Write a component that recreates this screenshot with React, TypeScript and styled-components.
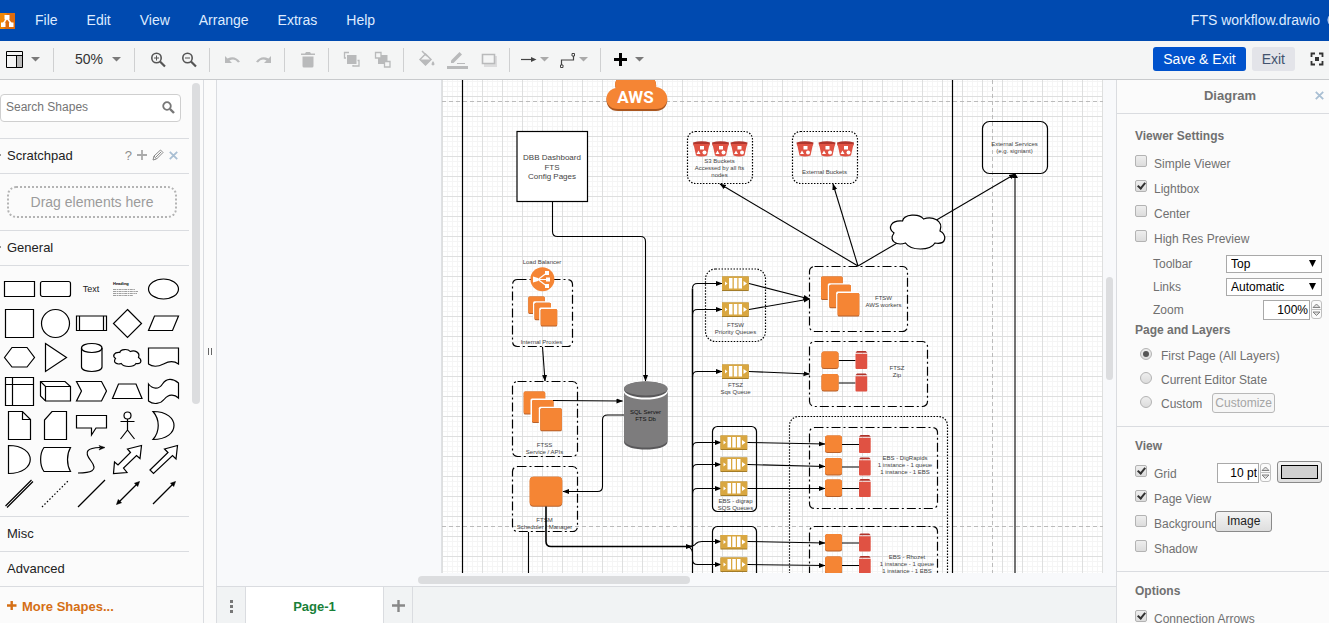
import React from 'react';
import styled, { createGlobalStyle } from 'styled-components';

const GlobalStyle = createGlobalStyle`
  *, *::before, *::after { box-sizing: border-box; }
  body {
    margin: 0;
    font-family: "Liberation Sans", Arial, Helvetica, sans-serif;
    font-size: 12px;
    overflow: hidden;
  }
  button, input, select { font-family: inherit; font-size: inherit; margin: 0; }
`;

/* ---------- shell ---------- */

const Shell = styled.div`
  display: flex;
  flex-direction: column;
  height: 100vh;
  overflow: hidden;
  background: #fbfbfb;
`;

const MenuBar = styled.header`
  display: flex;
  align-items: center;
  flex: none;
  height: 41px;
  background: #004ab0;
  color: #deebff;
  overflow: hidden;
`;

const Menus = styled.nav`
  display: flex;
  gap: 29px;
  margin-left: 20px;
  padding-bottom: 2px;
`;

const MenuItem = styled.button`
  border: 0;
  padding: 0;
  background: none;
  color: inherit;
  font-size: 14px;
  line-height: 20px;
`;

const FileTitle = styled.div`
  display: flex;
  align-items: center;
  gap: 7px;
  margin: 0 -14px 0 auto;
  padding-bottom: 2px;
  font-size: 14px;
  line-height: 20px;
  white-space: nowrap;
`;

/* ---------- toolbar ---------- */

const ToolBar = styled.div`
  display: flex;
  align-items: center;
  flex: none;
  height: 39px;
  border-bottom: 1px solid #c8cacc;
  background: #f4f5f5;
`;

const ToolButton = styled.button<{ $width?: number; $dim?: boolean }>`
  display: flex;
  align-items: center;
  flex: none;
  width: ${p => p.$width ?? 31}px;
  height: 24px;
  padding: 0 0 2px;
  border: 0;
  background: none;
  color: ${p => (p.$dim ? '#b9babb' : '#555')};
`;

const ZoomButton = styled(ToolButton)`
  gap: 9px;
  padding-left: 13px;
  color: #333;
  font-size: 14px;
`;

const Separator = styled.span`
  flex: none;
  width: 1px;
  height: 24px;
  margin: 0 8px 0 4px;
  background: #cfd0d1;
`;

const ToolBarEnd = styled.div`
  display: flex;
  align-items: center;
  gap: 6px;
  margin-left: auto;
  padding-right: 5px;
`;

const ActionButton = styled.button<{ $primary?: boolean }>`
  height: 24px;
  padding: 0 10px;
  margin-bottom: 2px;
  border: 0;
  border-radius: 3px;
  background: ${p => (p.$primary ? '#0052cc' : '#e3e4e9')};
  color: ${p => (p.$primary ? '#fff' : '#42526e')};
  font-size: 14px;
  line-height: 24px;
`;

const FullscreenButton = styled(ToolButton)`
  margin-left: 9px;
`;

/* ---------- body ---------- */

const Body = styled.div`
  display: flex;
  flex: 1;
  min-height: 0;
`;

const Sidebar = styled.aside`
  display: flex;
  flex-direction: column;
  flex: none;
  width: 204px;
  border-right: 1px solid #dadce0;
  color: #222;
`;

const SidebarScroll = styled.div`
  display: flex;
  flex: 1;
  min-height: 0;
`;

const Palettes = styled.div`
  flex: 1;
  min-width: 0;
  overflow: hidden;
`;

const VerticalTrack = styled.div<{ $width: number; $before: number }>`
  flex: none;
  width: ${p => p.$width}px;
  padding: ${p => p.$before}px 3px 0;
`;

const Thumb = styled.div<{ $length: number; $across?: boolean }>`
  width: ${p => (p.$across ? `${p.$length}px` : 'auto')};
  height: ${p => (p.$across ? '8px' : `${p.$length}px`)};
  border-radius: 4px;
  background: #dcdddf;
`;

const SearchArea = styled.div`
  padding: 14px 8px 16px 0;
  border-bottom: 1px solid #dadce0;
`;

const SearchBox = styled.label`
  display: flex;
  align-items: center;
  height: 28px;
  padding: 0 5px 2px;
  border: 1px solid #cfcfcf;
  border-radius: 4px;
  background: #fff;
`;

const SearchInput = styled.input`
  flex: 1;
  min-width: 0;
  padding: 0;
  border: 0;
  outline: 0;
  background: none;
  color: #222;
  &::placeholder { color: #757575; opacity: 1; }
`;

const PaletteTitle = styled.div<{ $last?: boolean }>`
  display: flex;
  align-items: center;
  height: 35px;
  padding: 0 11px 2px 0;
  border-bottom: ${p => (p.$last ? 0 : 1)}px solid #dadce0;
  font-size: 13px;
`;

const Twisty = styled.span<{ $shown?: boolean }>`
  width: 1px;
  height: 2px;
  margin-right: 6px;
  background: ${p => (p.$shown ? '#999' : 'transparent')};
`;

const TitleActions = styled.span`
  display: flex;
  align-items: center;
  gap: 5px;
  margin-left: auto;
`;

const IconButton = styled.button`
  display: flex;
  align-items: center;
  justify-content: center;
  padding: 0;
  border: 0;
  background: none;
  color: #8e8e8e;
`;

const ScratchArea = styled.div`
  padding: 12px;
  padding-left: 7px;
  border-bottom: 1px solid #dadce0;
`;

const DropZone = styled.div`
  height: 32px;
  border: 2px dotted #b4b4b4;
  border-radius: 9px;
  color: #9b9b9b;
  font-size: 14px;
  line-height: 28px;
  text-align: center;
`;

const ShapeGrid = styled.div`
  display: grid;
  grid-template-columns: repeat(5, 36px);
  grid-auto-rows: 34px;
  padding: 6px 1px;
  border-bottom: 1px solid #dadce0;
`;

const ShapeButton = styled.button`
  display: block;
  padding: 0;
  border: 0;
  background: none;
  & svg { display: block; }
`;

const MoreShapes = styled.button`
  display: flex;
  align-items: center;
  gap: 5px;
  flex: none;
  height: 37px;
  padding: 2px 0 0 7px;
  border: 0;
  border-top: 1px solid #dadce0;
  background: none;
  color: #d56f15;
  font-size: 13px;
  font-weight: bold;
`;

const Splitter = styled.div`
  display: flex;
  align-items: center;
  justify-content: center;
  gap: 2px;
  flex: none;
  width: 12px;
  &::before, &::after { content: ''; width: 1px; height: 7px; background: #666; }
`;

/* ---------- canvas ---------- */

const Workspace = styled.main`
  display: flex;
  flex-direction: column;
  flex: 1;
  min-width: 0;
  border-left: 1px solid #dadce0;
  background: #f8f9fb;
`;

const CanvasRow = styled.div`
  display: flex;
  flex: 1;
  min-height: 0;
`;

const Viewport = styled.div`
  flex: 1;
  min-width: 0;
  padding-left: 224px;
`;

const PageSheet = styled.div`
  height: 100%;
  border-left: 1px solid #dfe1e4;
  background: #fff;
`;

const Drawing = styled.svg`
  display: block;
  width: 100%;
  height: 100%;
  font-family: "Liberation Sans", Arial, sans-serif;
`;

const HorizontalTrack = styled.div`
  flex: none;
  height: 13px;
  padding: 3px 0 0 201px;
`;

const TabBar = styled.div`
  display: flex;
  flex: none;
  height: 37px;
  border-top: 1px solid #dadce0;
  background: #f1f3f4;
`;

const TabButton = styled.button<{ $width: number; $current?: boolean }>`
  display: flex;
  align-items: center;
  justify-content: center;
  width: ${p => p.$width}px;
  padding: 2px 0 0;
  border: 0;
  border-right: 1px solid #dadce0;
  background: ${p => (p.$current ? '#fff' : 'none')};
  color: ${p => (p.$current ? '#188038' : '#80868b')};
  font-size: 13px;
  font-weight: bold;
`;

/* ---------- format panel ---------- */

const FormatPanel = styled.aside`
  flex: none;
  width: 213px;
  border-left: 1px solid #dadce0;
  color: #707070;
  overflow: hidden;
`;

const PanelHeader = styled.div`
  display: grid;
  grid-template-columns: 34px 1fr 20px;
  align-items: center;
  height: 34px;
  margin-bottom: 3px;
  padding-bottom: 2px;
  border-bottom: 1px solid #dadce0;
  text-align: center;
  font-size: 13px;
  font-weight: bold;
`;

const PanelSection = styled.section`
  padding: 10px 7px 11px 18px;
  border-bottom: 1px solid #dadce0;
`;

const SectionTitle = styled.h2<{ $tight?: boolean }>`
  margin: 0 0 ${p => (p.$tight ? 5 : 6)}px;
  padding-top: 1px;
  font-size: 12px;
  line-height: 16px;
`;

const OptionRow = styled.div<{ $radio?: boolean }>`
  display: flex;
  align-items: center;
  height: ${p => (p.$radio ? 24 : 25)}px;
  padding-left: ${p => (p.$radio ? 5 : 0)}px;
`;

const Tick = styled.input`
  appearance: none;
  flex: none;
  display: flex;
  justify-content: center;
  width: 12px;
  height: 12px;
  margin: 0 0 3px;
  border: 1px solid #b3b3b3;
  border-radius: ${p => (p.type === 'radio' ? '50%' : '2px')};
  background: linear-gradient(#eee, #dcdcdc);
  &[type='checkbox']:checked::after {
    content: '';
    width: 5px;
    height: 8px;
    border: solid #333;
    border-width: 0 2px 2px 0;
    transform: rotate(40deg);
  }
  &[type='radio']:checked::after {
    content: '';
    align-self: center;
    width: 6px;
    height: 6px;
    border-radius: 50%;
    background: #555;
  }
`;

const OptionLabel = styled.label<{ $radio?: boolean; $narrow?: boolean }>`
  flex: ${p => (p.$narrow ? '0 0 68px' : 'none')};
  width: ${p => (p.$narrow ? '68px' : 'auto')};
  padding: 2px 0 0 ${p => (p.$radio ? 9 : 7)}px;
  line-height: 16px;
  white-space: nowrap;
`;

const FieldList = styled.div`
  padding: 2px 0 0 18px;
`;

const FieldRow = styled.div`
  display: flex;
  align-items: center;
  justify-content: space-between;
  height: 23px;
`;

const SelectBox = styled.span`
  display: grid;
  align-items: center;
  width: 96px;
  & > * { grid-area: 1 / 1; }
  & > svg { justify-self: end; margin-right: 6px; pointer-events: none; }
`;

const Select = styled.select`
  appearance: none;
  height: 18px;
  padding: 0 4px;
  border: 1px solid #a9a9a9;
  border-radius: 0;
  background: #fff;
  color: #000;
`;

const NumberGroup = styled.span`
  display: flex;
  align-items: center;
  gap: 1px;
  margin-left: auto;
`;

const NumberInput = styled.input<{ $width: number }>`
  width: ${p => p.$width}px;
  height: 20px;
  padding: 0 1px;
  border: 1px solid #a9a9a9;
  color: #000;
  text-align: right;
`;

const Stepper = styled.button`
  display: flex;
  width: 11px;
  height: 19px;
  padding: 0;
  border: 1px solid #c0c0c0;
  border-radius: 3px;
  background: #fbfbfb;
`;

const PanelButton = styled.button`
  position: relative;
  height: 21px;
  padding: 0 11px;
  margin-bottom: 2px;
  border: 1px solid #8a8a8a;
  border-radius: 3px;
  background: linear-gradient(#f4f4f4, #dedede);
  color: #222;
  line-height: 19px;
  &:disabled {
    height: 20px;
    margin: 0 0 0 10px;
    padding: 0 2px;
    border-color: #b8b8b8;
    background: #f6f6f6;
    color: #a5a5a5;
    line-height: 18px;
  }
`;

const ColorButton = styled.button`
  width: 45px;
  height: 22px;
  margin: 0 0 2px 6px;
  padding: 3px;
  border: 1px solid #8a8a8a;
  border-radius: 3px;
  background: linear-gradient(#f4f4f4, #dedede);
`;

const Swatch = styled.span`
  display: block;
  height: 14px;
  border: 1px solid #000;
  background: #d0d0d0;
`;

/* ---------- small icons ---------- */

const Caret = ({ color = '#7a7a7a' }: { color?: string }) => (
  <svg width="9" height="5" viewBox="0 0 9 5" aria-hidden><path d="M0 0h9L4.500 4.500z" fill={color} /></svg>
);

const ToolIcon = ({ children, width = 31 }: { children: React.ReactNode; width?: number }) => (
  <svg width={width} height="24" viewBox={`0 0 ${width} 24`} fill="none" aria-hidden>{children}</svg>
);

const Cross = ({ size = 9 }: { size?: number }) => (
  <svg width={size} height={size} viewBox="0 0 9 9" aria-hidden>
    <path d="M.8.8l7.400 7.400M8.200.8L.8 8.200" stroke="#a9bfd3" strokeWidth="1.800" />
  </svg>
);

const Logo = () => (
  <svg width="15" height="16" viewBox="0 0 15 16" aria-hidden>
    <path d="M0 0h14a1 1 0 0 1 1 1v14a1 1 0 0 1-1 1H0z" fill="#f08705" />
    <path d="M7 0h7a1 1 0 0 1 1 1v14a1 1 0 0 1-1 1H5l-3-3z" fill="#df6c0c" />
    <path d="M7 5L3 11M7 5l4.500 6" stroke="#fff" strokeWidth="1.500" />
    <path d="M4.500 2h5v4.500h-5zM1 9.500h4.500V14H1zM9 9.500h4.500V14H9z" fill="#fff" />
  </svg>
);

/* ---------- shape palette ---------- */

const CLOUD = 'M12.500 7C14 0 29 -1 33.500 5C42 2 54 6 50 17C57 21 57 31 45 29C40 37 21 37 15.500 29C7 32 -2 27 4 19C-3 14 1 6 12.500 7z';

const P = (d: string, fill = '#fff') => <path d={d} fill={fill} />;
const headUp = <path d="M30.500 5.500l-5 1.800 1.700 1.500 1.500 1.700z" fill="#000" strokeWidth="0.600" />;
const headDown = <path d="M7.500 28.500l5-1.800-1.700-1.500-1.500-1.700z" fill="#000" strokeWidth="0.600" />;

const shapes: [string, React.ReactNode][] = [
  ['Rectangle', P('M3.500 9.500h30v15h-30z')],
  ['Rounded rectangle', <rect x="3.500" y="9.500" width="30" height="15" rx="2" fill="#fff" />],
  ['Text', <text x="18" y="20" textAnchor="middle" fontSize="9" fill="#222" stroke="none">Text</text>],
  ['Textbox', <>
    <text x="4" y="13" fontSize="4" fontWeight="bold" fill="#000" stroke="none">Heading</text>
    <path d="M4 17.500h22M4 19.500h25M4 21.500h24M4 23.500h20" stroke="#888" strokeWidth="0.800" strokeDasharray="3 .6 1.500 .5" />
  </>],
  ['Ellipse', <ellipse cx="18.500" cy="17" rx="15" ry="10" fill="#fff" />],
  ['Square', P('M4.500 3.500h28v28h-28z')],
  ['Circle', <circle cx="18.500" cy="17.500" r="14" fill="#fff" />],
  ['Process', P('M3.500 10h30v14.500h-30zM6.500 10v14.500M30.500 10v14.500')],
  ['Diamond', P('M18.500 3.500l14 14-14 14-14-14z')],
  ['Parallelogram', P('M9.500 10h24l-6 14.500h-24z')],
  ['Hexagon', P('M3.500 17.500l7.500-10h15l7.500 10-7.500 9.500H11z')],
  ['Triangle', P('M8.500 3.500l21 14-21 14z')],
  ['Cylinder', <>{P('M8.500 8c0-6 20.500-6 20.500 0v19c0 6-20.500 6-20.500 0z')}{P('M8.500 8c0 6 20.500 6 20.500 0', 'none')}</>],
  ['Cloud', <path d={CLOUD} transform="translate(4.500 9) scale(.5)" strokeWidth="2.400" fill="#fff" />],
  ['Document', P('M3.500 8h30v16c-7-5-13-1-15 0-6 3-11 3-15 0z')],
  ['Internal storage', P('M4.500 3.500h28v28h-28zM4.500 10.500h28M11.500 3.500v28')],
  ['Cube', <>{P('M3.500 7.500h24.500l5.500 5V27H8.500l-5-5z')}{P('M3.500 7.500l5 5h25M8.500 12.500V27', 'none')}</>],
  ['Step', P('M3.500 7.500h25l5 9.500-5 10h-25l5-10z')],
  ['Trapezoid', P('M9.500 10h17.500l6 14.500H3.500z')],
  ['Tape', P('M3.500 10c4 5 10 6 14 0s10-6 16-1v15c-4-4-10-4-14 1s-11 6-16 2z')],
  ['Note', P('M7.500 3.500h14l8 8v20h-22zM21.500 3.500v8h8')],
  ['Card', P('M15 3.500h14.500v28H7.500V12z')],
  ['Callout', P('M3.500 7.500h30V20H23l-4.500 7V20h-15z')],
  ['Actor', <>{P('M18.500 11v11M11.500 13.500h14M18.500 22l-7 9M18.500 22l7 9', 'none')}<circle cx="18.500" cy="7.500" r="3.500" fill="#fff" /></>],
  ['Or', P('M8 3.500c28 0 28 28 0 28 7-8 7-20 0-28z')],
  ['And', P('M7.500 3.500c29 0 29 28 0 28z')],
  ['Data storage', P('M7 5.500h26.500c-4 7-4 17 0 24H7c-4.500-6-4.500-18 0-24z')],
  ['Curve', <>{P('M5 31c12 0 21-2 13-12S15 6 27 5.500', 'none')}<path d="M32 5.500l-6-2 1.500 2-1.500 2.500z" fill="#000" strokeWidth="0.500" /></>],
  ['Bidirectional arrow', P('M4.500 31.500L5.500 20l3.500 3L21.500 10.500l-3-3.500L32.500 3.500 31 16.500l-3.500-3L14.500 26l3.500 4.500z')],
  ['Arrow', P('M5 28L23 10.500l-3.500-3.500L32.500 3.500 31 17l-3.500-3.500L8.500 31.500z')],
  ['Link', P('M4.500 30l26-26M6 31.500l26-26', 'none')],
  ['Dashed line', <path d="M5 31L32 4" strokeDasharray="1.500 2" />],
  ['Line', P('M5 31L32 4', 'none')],
  ['Bidirectional connector', <>{P('M9 27L28.500 7.500', 'none')}{headUp}{headDown}</>],
  ['Directional connector', <>{P('M8 28L28.500 7.500', 'none')}{headUp}</>],
];

/* ---------- diagram parts ---------- */

const Caption = ({ x, y, lines, size = 6, step = 7, color = '#444' }: { x: number; y: number; lines: string[]; size?: number; step?: number; color?: string }) => (
  <text textAnchor="middle" fontSize={size} fill={color}>
    {lines.map((line, i) => <tspan key={line} x={x} y={y + i * step}>{line}</tspan>)}
  </text>
);

const DASHES = { solid: undefined, dotted: '1.500 1.500', chain: '9 3 2 3' };

const Group = ({ x, y, w, h, kind = 'chain', r = 5, fill = 'none' }: { x: number; y: number; w: number; h: number; kind?: keyof typeof DASHES; r?: number; fill?: string }) => (
  <rect x={x} y={y} width={w} height={h} rx={r} fill={fill} stroke="#000" strokeWidth={1.2} strokeDasharray={DASHES[kind]} />
);

const Instance = ({ x, y, w = 17, h = 17.5, r = 2.5, edge = false }: { x: number; y: number; w?: number; h?: number; r?: number; edge?: boolean }) => (
  <g>
    {edge && <rect x={x - 1.5} y={y - 1.5} width={w + 2} height={h + 1} rx={r} fill="#fff" />}
    <rect x={x} y={y} width={w} height={h} rx={r} fill="#b8612a" />
    <rect x={x} y={y} width={w} height={h - 1} rx={r} fill="#f58534" />
  </g>
);

const Stack = ({ x, y, w, h, dx, dy }: { x: number; y: number; w: number; h: number; dx: number; dy: number }) => (
  <>{[0, 1, 2].map(i => <Instance key={i} x={x + i * dx} y={y + i * dy} w={w} h={h} r={1.5} edge={i > 0} />)}</>
);

const Queue = ({ x, y }: { x: number; y: number }) => (
  <g transform={`translate(${x} ${y})`}>
    <path d="M0 0h26.700v14.500H0z" fill="#a37c28" />
    <path d="M0 0h26.700v13.500H0z" fill="#d9a741" />
    <path d="M7 1.500h3.500V12H7zM11.800 1.500h3.500V12h-3.500zM16.500 1.500h3.500V12h-3.500zM3 5l2.500 2L3 9zM21.500 4.500L25 7l-3.500 2.500z" fill="#fff" />
  </g>
);

const Volume = ({ x, y }: { x: number; y: number }) => (
  <g transform={`translate(${x} ${y})`}>
    <path d="M1.500 0h8.700l1.500 1.800H0z" fill="#b0332a" />
    <path d="M0 2.800h11.700v14.200a1 1 0 0 1-1 1H1a1 1 0 0 1-1-1z" fill="#e05243" />
  </g>
);

const Worker = ({ x, y, vx }: { x: number; y: number; vx: number }) => (
  <g>
    <path d={`M${x + 17} ${y + 9}H${vx}`} stroke="#000" />
    <Instance x={x} y={y} />
    <Volume x={vx} y={y - 0.5} />
  </g>
);

const Bucket = ({ x, y = 141 }: { x: number; y?: number }) => (
  <g transform={`translate(${x} ${y})`}>
    <path d="M0 1.500Q8.500-1 17 1.500l-.5 3H.5z" fill="#b0352c" />
    <path d="M.5 3h16L14 14.500q-5.500 2-11 0z" fill="#e05243" />
    <path d="M7 5h4v3.500H7zM5.500 9.500l2 3.500h-4z" fill="#fff" />
    <circle cx="11.500" cy="11.500" r="2" fill="#fff" />
  </g>
);

const Wire = ({ d, head = true, width = 1.1 }: { d: string; head?: boolean; width?: number }) => (
  <path d={d} fill="none" stroke="#000" strokeWidth={width} markerEnd={head ? 'url(#head)' : undefined} />
);

const branch = (y: number, end: number) => `M692.500 ${y + 5}q0-5 5-5H${end}`;

const Diagram = () => (
  <Drawing role="img" aria-label="FTS workflow diagram">
    <defs>
      <pattern id="grid" x="2" y="16" width="20" height="20" patternUnits="userSpaceOnUse">
        <path d="M5.500 0v20M10.500 0v20M15.500 0v20M0 5.500h20M0 10.500h20M0 15.500h20" stroke="#f5f5f5" />
        <path d="M.5 0v20M0 .5h20" stroke="#dedfdf" />
      </pattern>
      <marker id="head" markerUnits="userSpaceOnUse" markerWidth="7" markerHeight="6" refX="6" refY="3" orient="auto">
        <path d="M0 .5l6.500 2.500L0 5.500z" />
      </marker>
    </defs>
    <g transform="translate(-442 -80)">
      <rect x="442" y="80" width="100%" height="100%" fill="url(#grid)" />
      <path d="M442 101.500h2000M442 526.500h2000M992.500 80v2000" stroke="#bbb" strokeDasharray="4 3" />
      <path d="M462.500 80v2000M952.500 80v2000" stroke="#000" strokeWidth="1.200" />

      <path d="M618 111c-15 0-15-20-2-22q-3-8 4-12h32q5 4 4 11c15 2 15 23 0 23z" fill="#a9561f" />
      <path d="M618 109c-15 0-15-19-2-21q-3-7 4-11h32q5 4 4 10c15 2 15 22 0 22z" fill="#f58534" />
      <text x="635.500" y="103" textAnchor="middle" fontFamily="Roboto, sans-serif" fontSize="17" fontWeight="700" fill="#fff">AWS</text>

      <Wire d="M552.500 202v29.500q0 5 5 5h83q5 0 5 5V381" />
      <Group x={517} y={131.5} w={70.5} h={70} kind="solid" r={0} fill="#fff" />
      <Caption x={552} y={160} lines={['DBB Dashboard', 'FTS', 'Config Pages']} size={8} step={9.500} />

      <Group x={687.5} y={131.5} w={65} h={52} kind="dotted" r={8} />
      {[693, 712, 730.5].map(x => <Bucket key={x} x={x} />)}
      <Caption x={719.5} y={163} lines={['S3 Buckets', 'Accessed by all fts', 'nodes']} />
      <Group x={792.5} y={131.5} w={65} h={52} kind="dotted" r={8} />
      {[796.5, 818.5, 837].map(x => <Bucket key={x} x={x} />)}
      <Caption x={824.5} y={174} lines={['External Buckets']} />
      <Wire d="M858 266L720 184" />
      <Wire d="M858 266L833 184" />
      <Wire d="M858 266L1015 174" />
      <path d={CLOUD} transform="translate(890 214)" fill="#fff" stroke="#000" strokeWidth="1.200" />
      <path d="M1015 176v2000" stroke="#444" strokeWidth="1.500" />
      <path d="M1015 173l-3 5h6z" />
      <Group x={982.5} y={121.5} w={65} h={52} kind="solid" r={7} />
      <Caption x={1014.5} y={146} lines={['External Services', '(e.g. signiant)']} />

      <Caption x={542} y={264} lines={['Load Balancer']} />
      <Group x={512.5} y={279.5} w={60} h={67} />
      <circle cx="542.400" cy="279.300" r="12" fill="#f58534" />
      <path d="M535 279.500h12M538 279.500l8-6M538 279.500l8 6" stroke="#fff" strokeWidth="1.200" />
      <path d="M533 276.500l5 1.500v3l-5 1.500zM545 271h4v4h-4zM546 277.500h4v4h-4zM545 284h4v4h-4z" fill="#fff" />
      <Stack x={528.3} y={296.5} w={16.5} h={17.5} dx={6.2} dy={6.2} />
      <Caption x={541.5} y={344} lines={['Internal Proxies']} />
      <Wire d="M542.500 347L545 381" />

      <Group x={512.5} y={381.5} w={65} h={75} />
      <Stack x={523.7} y={391.5} w={21.5} h={23} dx={8.3} dy={8.4} />
      <Wire d="M553 400.500L622.500 401" />
      <Caption x={544.5} y={447} lines={['FTSS', 'Service / APIs']} />

      <Group x={512.5} y={466.5} w={65} h={65} />
      <Caption x={544.5} y={522} lines={['FTSM', 'Scheduler / Manager']} />
      <Instance x={529.7} y={476.7} w={32.5} h={30} r={4} />
      <Wire d="M546 506.500v35q0 5 5 5h141" width={1.6} />
      <Wire d="M528.500 532v2000" head={false} />

      <path d="M624 391v51c0 10 43.500 10 43.500 0v-51z" fill="#59585a" />
      <path d="M624 391v49c0 10 43.500 10 43.500 0v-49z" fill="#7d7c7d" />
      <ellipse cx="645.750" cy="391.500" rx="22" ry="8" fill="#fff" />
      <ellipse cx="645.750" cy="389.500" rx="21.750" ry="8" fill="#59585a" />
      <ellipse cx="645.750" cy="388.500" rx="21.750" ry="7" fill="#7d7c7d" />
      <Caption x={645.5} y={414} lines={['SQL Server', 'FTS Db']} color="#111" />
      <Wire d="M624 415h-16.500q-5 0-5 5v66.500q0 5-5 5H563" />

      <Wire d="M692.500 2000V540" head={false} width={1.2} />
      <Wire d="M692.500 546V288.500" head={false} width={1.5} />
      {[283.5, 309.5, 371.5].map(y => <Wire key={y} d={branch(y, 722)} />)}
      {[442.5, 464.5, 488.5].map(y => <Wire key={y} d={branch(y, 721)} />)}
      <Wire d="M688 546.500q6 0 8-3 2-2 6-2H721" />
      <Wire d="M688 546.500q4 2 4.500 6v7q0 5 5 5H721" />

      <Group x={705.5} y={269} w={60} h={72.5} kind="dotted" r={10} />
      <Queue x={722} y={276.5} />
      <Queue x={722} y={302.5} />
      <Caption x={735.5} y={327} lines={['FTSW', 'Priority Queues']} />
      <Queue x={722} y={364.5} />
      <Caption x={735.5} y={387} lines={['FTSZ', 'Sqs Queue']} />
      <Wire d="M749 283.500L809.500 299" />
      <Wire d="M749 309.500L809.500 299" />
      <Wire d="M749 371.500L809.500 374" />

      <Group x={809.5} y={266.5} w={98} h={65} />
      <Stack x={821} y={276.5} w={21.7} h={23.5} dx={8.3} dy={8.3} />
      <Caption x={883.5} y={300} lines={['FTSW', 'AWS workers']} />
      <Group x={809.5} y={341.5} w={118} h={65} />
      <Worker x={821.5} y={351.5} vx={855.5} />
      <Worker x={821.5} y={374} vx={855.5} />
      <Caption x={897} y={370} lines={['FTSZ', 'Zip']} />

      <Group x={712.5} y={426.5} w={44} h={85} kind="solid" />
      {[435.5, 457.5, 481.5].map(y => <Queue key={y} x={720.5} y={y} />)}
      <Caption x={735.5} y={503} lines={['EBS - digrap', 'SQS Queues']} />
      <Group x={712.5} y={526.5} w={44} h={85} kind="solid" />
      {[535, 557.5].map(y => <Queue key={y} x={720.5} y={y} />)}

      <Group x={789.5} y={416.5} w={158} h={300} kind="dotted" r={9} />
      <Group x={809.5} y={427.5} w={128} h={81} />
      <Group x={809.5} y={526.5} w={128} h={81} />
      <Wire d="M747.500 442.500L825 444" />
      <Wire d="M747.500 464.500L825 466.500" />
      <Wire d="M747.500 488.500H825" />
      <Wire d="M747.500 541.500L825 543" />
      <Wire d="M747.500 564.500L825 565.500" />
      {[435.5, 458, 479.5, 534, 556.5].map(y => <Worker key={y} x={825} y={y} vx={859} />)}
      <Caption x={905} y={460} lines={['EBS - DigRapids', '1 instance - 1 queue', '1 instance - 1 EBS']} />
      <Caption x={907} y={559} lines={['EBS - Rhozet', '1 instance - 1 queue', '1 instance - 1 EBS']} />
    </g>
  </Drawing>
);

/* ---------- composed parts ---------- */

const Option = ({ id, text, checked, radio, narrow, children }: { id: string; text: string; checked?: boolean; radio?: boolean; narrow?: boolean; children?: React.ReactNode }) => (
  <OptionRow $radio={radio}>
    <Tick id={id} type={radio ? 'radio' : 'checkbox'} name={radio ? 'pages' : undefined} defaultChecked={checked} />
    <OptionLabel htmlFor={id} $radio={radio} $narrow={narrow}>{text}</OptionLabel>
    {children}
  </OptionRow>
);

const NumberField = ({ id, value, width, label }: { id: string; value: string; width: number; label?: string }) => (
  <NumberGroup>
    <NumberInput id={id} $width={width} defaultValue={value} aria-label={label} />
    <Stepper aria-label="Step value">
      <svg width="9" height="17" viewBox="0 0 9 17" aria-hidden>
        <path d="M1 6.500L4.500 3 8 6.500zM1 11l3.500 3.500L8 11z" fill="#ddd" stroke="#777" strokeWidth="0.900" />
        <path d="M0 8.500h9" stroke="#c0c0c0" />
      </svg>
    </Stepper>
  </NumberGroup>
);

const DropDown = ({ id, value }: { id: string; value: string }) => (
  <SelectBox>
    <Select id={id} defaultValue={value}><option>{value}</option></Select>
    <svg width="7" height="7" viewBox="0 0 7 7" aria-hidden><path d="M0 0h7L3.500 7z" /></svg>
  </SelectBox>
);

const TopBar = () => (
  <MenuBar>
    <Logo />
    <Menus>
      {['File', 'Edit', 'View', 'Arrange', 'Extras', 'Help'].map(m => <MenuItem key={m}>{m}</MenuItem>)}
    </Menus>
    <FileTitle>
      FTS workflow.drawio
      <svg width="16" height="16" viewBox="0 0 16 16" fill="none" stroke="#deebff" aria-hidden>
        <circle cx="8" cy="8" r="7" /><path d="M1 8h14M8 1v14" />
      </svg>
    </FileTitle>
  </MenuBar>
);

const Tools = () => (
  <ToolBar>
    <ToolButton $width={49} aria-label="View">
      <ToolIcon width={31}>
        <path d="M17 9h5v11h-5z" fill="#bbb" />
        <path d="M6.500 4.500h16v16h-16zM6.500 8.500h16M16.500 8.500v12" stroke="#000" />
      </ToolIcon>
      <Caret />
    </ToolButton>
    <Separator />
    <ZoomButton $width={68}>50% <Caret /></ZoomButton>
    <Separator />
    <ToolButton aria-label="Zoom in"><ToolIcon>
      <circle cx="13.500" cy="11" r="4.700" stroke="currentColor" strokeWidth="1.600" />
      <path d="M17 14.500l5 5" stroke="currentColor" strokeWidth="2.200" />
      <path d="M11 11h5M13.500 8.500v5" stroke="currentColor" />
    </ToolIcon></ToolButton>
    <ToolButton aria-label="Zoom out"><ToolIcon>
      <circle cx="13.500" cy="11" r="4.700" stroke="currentColor" strokeWidth="1.600" />
      <path d="M17 14.500l5 5" stroke="currentColor" strokeWidth="2.200" />
      <path d="M11 11h5" stroke="currentColor" />
    </ToolIcon></ToolButton>
    <Separator />
    <ToolButton $dim aria-label="Undo"><ToolIcon>
      <path d="M7 9v7h7l-2.500-2.500q5-3 8.500 2l2-.7q-5-7-12.500-3.300z" fill="currentColor" />
    </ToolIcon></ToolButton>
    <ToolButton $dim aria-label="Redo"><ToolIcon>
      <path d="M22 9v7h-7l2.500-2.500q-5-3-8.500 2l-2-.7q5-7 12.500-3.300z" fill="currentColor" />
    </ToolIcon></ToolButton>
    <Separator />
    <ToolButton $dim aria-label="Delete"><ToolIcon>
      <path d="M8 6.500h4L13 5h4l1 1.500h4V8H8zM9.500 9.500h11V19q0 1.500-1.500 1.500h-8q-1.500 0-1.500-1.500z" fill="currentColor" />
    </ToolIcon></ToolButton>
    <Separator />
    <ToolButton $dim aria-label="To front"><ToolIcon>
      <path d="M10 8h9.500v9H10z" fill="currentColor" />
      <path d="M12 5.500H7.500V11H9M20.500 13.500H22V19h-6v-1" stroke="currentColor" strokeWidth="1.300" />
    </ToolIcon></ToolButton>
    <ToolButton $dim aria-label="To back"><ToolIcon>
      <path d="M10 8h9.500v9H10z" fill="currentColor" />
      <path d="M7.500 5.500h5.500v5.500H7.500zM16.500 14.500h5.500V20h-5.500z" fill="#f4f5f5" stroke="currentColor" strokeWidth="1.300" />
    </ToolIcon></ToolButton>
    <Separator />
    <ToolButton $dim aria-label="Fill colour"><ToolIcon>
      <path d="M8 12.500L13.500 7l5.500 5.500-5.500 5.500z" stroke="currentColor" strokeWidth="1.500" />
      <path d="M8 12.500h11l-5.500 6zM21 14q3 4 0 4.500-3-.5 0-4.500z" fill="currentColor" />
      <path d="M10 4l5 5" stroke="currentColor" strokeWidth="1.500" />
    </ToolIcon></ToolButton>
    <ToolButton $dim aria-label="Line colour"><ToolIcon>
      <path d="M8 13.500l8.500-8.500 2.500 2.500L10.500 16H8z" fill="currentColor" />
      <path d="M14 16.500h8" stroke="currentColor" /><path d="M4 19h21v3H4z" fill="currentColor" />
    </ToolIcon></ToolButton>
    <ToolButton $dim aria-label="Shadow"><ToolIcon>
      <path d="M10 9h13v11H10z" fill="#dcdcdd" />
      <path d="M8.500 7.500h12v9h-12z" fill="#f4f5f5" stroke="currentColor" strokeWidth="1.600" />
    </ToolIcon></ToolButton>
    <Separator />
    <ToolButton $width={39} aria-label="Connection"><ToolIcon width={22}>
      <path d="M3 12.500h11" stroke="#444" strokeWidth="1.200" /><path d="M13 10l5.500 2.500L13 15z" fill="#444" />
    </ToolIcon><Caret color="#aaa" /></ToolButton>
    <ToolButton $width={39} aria-label="Waypoints"><ToolIcon width={22}>
      <path d="M4.500 18v-5h12V9" stroke="#444" strokeWidth="1.200" />
      <path d="M3.500 18H6v2.500H3.500zM15 6.500h2.500V9H15z" stroke="#444" fill="#fff" />
    </ToolIcon><Caret color="#aaa" /></ToolButton>
    <Separator />
    <ToolButton $width={39} aria-label="Insert"><ToolIcon width={26}>
      <path d="M5 12.500h13M11.500 6v13" stroke="#000" strokeWidth="3" />
    </ToolIcon><Caret /></ToolButton>
    <ToolBarEnd>
      <ActionButton $primary>Save &amp; Exit</ActionButton>
      <ActionButton>Exit</ActionButton>
      <FullscreenButton $width={14} aria-label="Full screen"><ToolIcon width={14}>
        <path d="M1.500 10V6.500H5M9 6.500h3.500V10M12.500 14v3.500H9M5 17.500H1.500V14" stroke="#333" strokeWidth="1.800" />
        <path d="M5 10h4v4H5z" fill="#333" />
      </ToolIcon></FullscreenButton>
    </ToolBarEnd>
  </ToolBar>
);

const ShapesPanel = () => (
  <Sidebar>
    <SidebarScroll>
      <Palettes>
        <SearchArea>
          <SearchBox>
            <SearchInput type="text" placeholder="Search Shapes" aria-label="Search Shapes" />
            <svg width="13" height="13" viewBox="0 0 13 13" fill="none" stroke="#777" aria-hidden>
              <circle cx="5" cy="5" r="3.800" strokeWidth="1.800" /><path d="M8 8l4 4" strokeWidth="2.400" />
            </svg>
          </SearchBox>
        </SearchArea>
        <PaletteTitle>
          <Twisty $shown />Scratchpad
          <TitleActions>
            <IconButton>?</IconButton>
            <IconButton aria-label="Add"><svg width="10" height="10" viewBox="0 0 10 10" aria-hidden><path d="M0 5h10M5 0v10" stroke="#aaa" strokeWidth="1.800" /></svg></IconButton>
            <IconButton aria-label="Edit"><svg width="12" height="12" viewBox="0 0 12 12" fill="none" stroke="#888" aria-hidden><path d="M1 11l1-4 6.500-6L11 3.500 4.500 10zM2 7l2.500 3M4 8l5-5" /></svg></IconButton>
            <IconButton aria-label="Close"><Cross /></IconButton>
          </TitleActions>
        </PaletteTitle>
        <ScratchArea><DropZone>Drag elements here</DropZone></ScratchArea>
        <PaletteTitle><Twisty $shown />General</PaletteTitle>
        <ShapeGrid>
          {shapes.map(([name, art]) => (
            <ShapeButton key={name} aria-label={name}>
              <svg width="36" height="34" viewBox="0 0 36 34" stroke="#000" strokeWidth="1.200" fill="none" aria-hidden>{art}</svg>
            </ShapeButton>
          ))}
        </ShapeGrid>
        <PaletteTitle><Twisty />Misc</PaletteTitle>
        <PaletteTitle $last><Twisty />Advanced</PaletteTitle>
      </Palettes>
      <VerticalTrack $width={14} $before={3}><Thumb $length={321} /></VerticalTrack>
    </SidebarScroll>
    <MoreShapes>
      <svg width="10" height="10" viewBox="0 0 10 10" aria-hidden><path d="M0 4.500h9.500M4.700 0v9" stroke="#d56f15" strokeWidth="2.400" /></svg>
      More Shapes...
    </MoreShapes>
  </Sidebar>
);

const Canvas = () => (
  <Workspace>
    <CanvasRow>
      <Viewport><PageSheet><Diagram /></PageSheet></Viewport>
      <VerticalTrack $width={13} $before={197}><Thumb $length={103} /></VerticalTrack>
    </CanvasRow>
    <HorizontalTrack><Thumb $across $length={272} /></HorizontalTrack>
    <TabBar>
      <TabButton $width={29} aria-label="Pages">
        <svg width="3" height="13" viewBox="0 0 3 13" fill="#777" aria-hidden><path d="M0 0h3v3H0zM0 5h3v3H0zM0 10h3v3H0z" /></svg>
      </TabButton>
      <TabButton $width={138} $current>Page-1</TabButton>
      <TabButton $width={29} aria-label="Insert page">
        <svg width="13" height="13" viewBox="0 0 13 13" aria-hidden><path d="M0 5.500h13M6.500 0v12" stroke="#888" strokeWidth="2.400" /></svg>
      </TabButton>
    </TabBar>
  </Workspace>
);

const Format = () => (
  <FormatPanel>
    <PanelHeader><span /><span>Diagram</span><IconButton aria-label="Close panel"><Cross /></IconButton></PanelHeader>
    <PanelSection>
      <SectionTitle>Viewer Settings</SectionTitle>
      <Option id="simple" text="Simple Viewer" />
      <Option id="lightbox" text="Lightbox" checked />
      <Option id="center" text="Center" />
      <Option id="highres" text="High Res Preview" />
      <FieldList>
        <FieldRow><label htmlFor="toolbar">Toolbar</label><DropDown id="toolbar" value="Top" /></FieldRow>
        <FieldRow><label htmlFor="links">Links</label><DropDown id="links" value="Automatic" /></FieldRow>
        <FieldRow><label htmlFor="zoom">Zoom</label><NumberField id="zoom" value="100%" width={47} /></FieldRow>
      </FieldList>
      <SectionTitle $tight>Page and Layers</SectionTitle>
      <Option radio id="first" text="First Page (All Layers)" checked />
      <Option radio id="current" text="Current Editor State" />
      <Option radio id="custom" text="Custom"><PanelButton disabled>Customize</PanelButton></Option>
    </PanelSection>
    <PanelSection>
      <SectionTitle>View</SectionTitle>
      <Option id="gridOn" text="Grid" checked>
        <NumberField id="gridSize" value="10 pt" width={42} label="Grid size" />
        <ColorButton aria-label="Grid colour"><Swatch /></ColorButton>
      </Option>
      <Option id="pageView" text="Page View" checked />
      <Option id="background" text="Background" narrow><PanelButton>Image</PanelButton></Option>
      <Option id="shadow" text="Shadow" />
    </PanelSection>
    <PanelSection>
      <SectionTitle>Options</SectionTitle>
      <Option id="arrows" text="Connection Arrows" checked />
    </PanelSection>
  </FormatPanel>
);

export default function App() {
  return (
    <Shell>
      <GlobalStyle />
      <TopBar />
      <Tools />
      <Body>
        <ShapesPanel />
        <Splitter />
        <Canvas />
        <Format />
      </Body>
    </Shell>
  );
}
